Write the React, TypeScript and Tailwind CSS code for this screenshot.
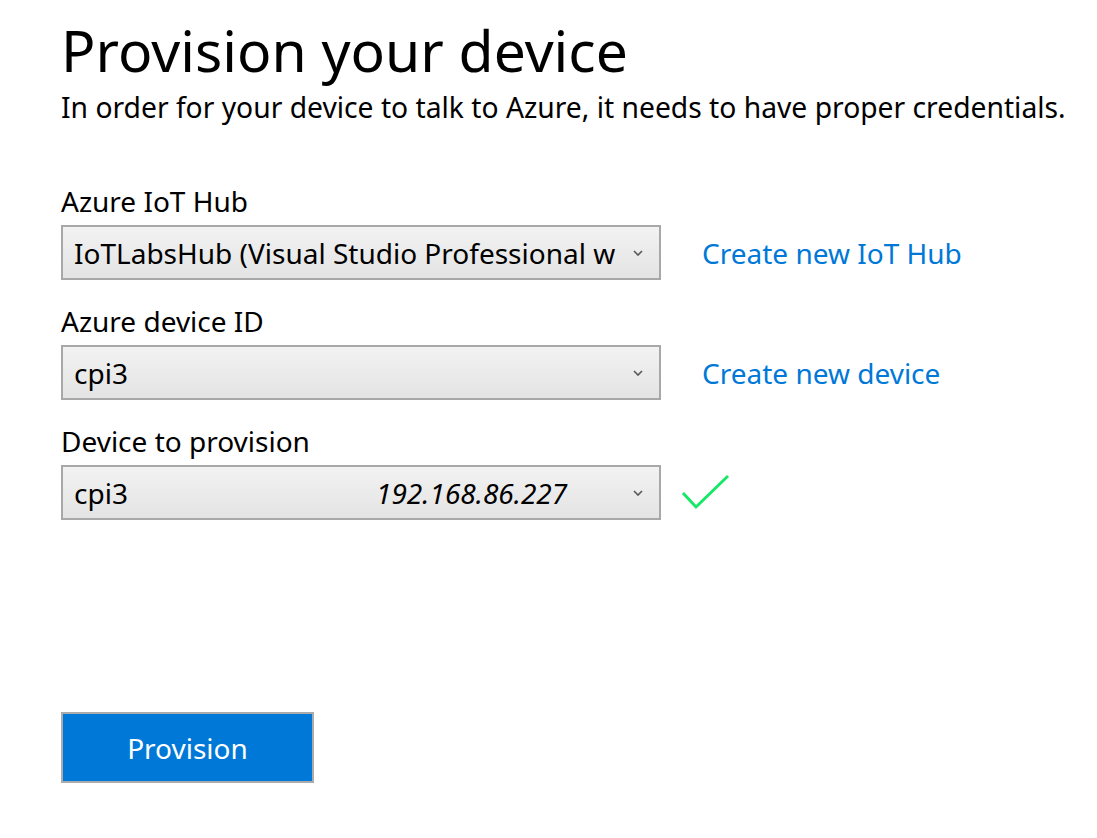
import React from 'react';

function Chevron() {
    return (
        <svg width="10" height="6" viewBox="0 0 10 6" className="shrink-0">
            <path d="M1 1 L5 5 L9 1" fill="none" stroke="#5a5a5a" strokeWidth="1.7" />
        </svg>
    );
}

function SelectBox({ children }: { children: React.ReactNode }) {
    return (
        <div className="w-[600px] h-[55px] border-2 border-[#a8a8a8] bg-gradient-to-b from-[#f2f2f2] to-[#e4e4e4] flex items-center pl-[11px] pr-[16px]">
            <div className="flex-1 flex items-center overflow-hidden whitespace-nowrap leading-[36px]">{children}</div>
            <Chevron />
        </div>
    );
}

export default function App() {
    return (
        <div
            className="min-h-screen bg-white text-black pl-[61px] pt-[20px]"
            style={{ fontFamily: '"Noto Sans", "Open Sans", sans-serif' }}
        >
            <h1 className="text-[57px] leading-[60px] font-normal">Provision your device</h1>
            <p className="mt-[9px] text-[28.25px] leading-[36px]">
                In order for your device to talk to Azure, it needs to have proper credentials.
            </p>

            <div className="mt-[58px] flex flex-col gap-[23px]">
                <div>
                    <div className="text-[28px] leading-[36px]">Azure IoT Hub</div>
                    <div className="mt-[6px] flex items-center">
                        <SelectBox>
                            <span className="text-[28px]">IoTLabsHub (Visual Studio Professional w</span>
                        </SelectBox>
                        <a href="#" className="ml-[41px] text-[28px] leading-[36px] text-[#0078d7]">Create new IoT Hub</a>
                    </div>
                </div>

                <div>
                    <div className="text-[28px] leading-[36px]">Azure device ID</div>
                    <div className="mt-[6px] flex items-center">
                        <SelectBox>
                            <span className="text-[28px]">cpi3</span>
                        </SelectBox>
                        <a href="#" className="ml-[41px] text-[28px] leading-[36px] text-[#0078d7]">Create new device</a>
                    </div>
                </div>

                <div>
                    <div className="text-[28px] leading-[36px]">Device to provision</div>
                    <div className="mt-[6px] flex items-center">
                        <SelectBox>
                            <span className="text-[28px] w-[302px] shrink-0">cpi3</span>
                            <span className="text-[28px] italic">192.168.86.227</span>
                        </SelectBox>
                        <svg width="50" height="38" viewBox="0 0 50 38" className="ml-[20px]">
                            <path d="M2 19 L15 33 L47 2" fill="none" stroke="#14e864" strokeWidth="2.9" />
                        </svg>
                    </div>
                </div>
            </div>

            <button className="mt-[192px] w-[253px] h-[71px] bg-[#0078d7] border-2 border-[#ababab] text-white text-[28px] leading-[36px]">
                Provision
            </button>
        </div>
    );
}
